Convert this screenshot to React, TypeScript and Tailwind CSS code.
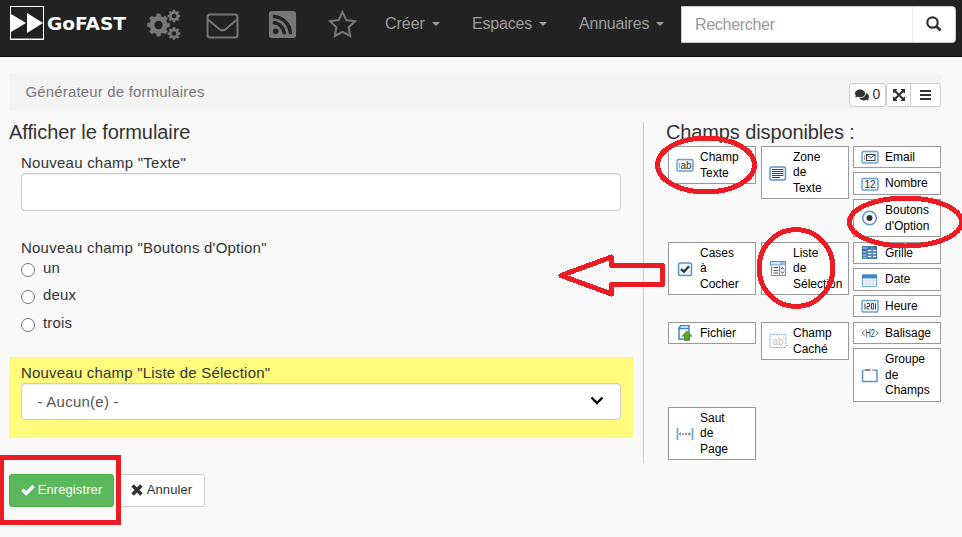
import type { ReactNode } from 'react';
import { FaRssSquare, FaComments } from 'react-icons/fa';

const BLUE = '#5b95cc';

function Caret() {
  return <span className="ml-[7px] inline-block border-x-4 border-t-4 border-x-transparent border-t-[#9d9d9d]" />;
}

function Logo() {
  return (
    <svg width="120" height="36" viewBox="0 0 120 36">
      <rect x="1.500" y="1.500" width="33" height="33" fill="none" stroke="#fff" />
      <path d="M2 33.500H34" stroke="#888" />
      <path d="M2 9V27L17 18ZM18 8V28L34 18Z" fill="#fff" />
      <text x="38" y="25" fontSize="18" fontWeight="bold" fill="#fff" textLength="79" lengthAdjust="spacingAndGlyphs" fontFamily="DejaVu Sans, sans-serif">GoFAST</text>
    </svg>
  );
}

// Ring with eight square teeth, centred on (x, y).
function Gear({ x, y, scale }: { x: number; y: number; scale: number }) {
  return (
    <g transform={`translate(${x} ${y}) scale(${scale})`}>
      <circle r="6.800" fill="none" stroke="#777" strokeWidth="5" />
      {[0, 45, 90, 135, 180, 225, 270, 315].map((angle) => (
        <path key={angle} d="M-2.300 -8.500L-1.700 -11.500H1.700L2.300 -8.500Z" fill="#777" stroke="#777" strokeWidth="0.500" transform={`rotate(${angle})`} />
      ))}
    </g>
  );
}

function Cogs() {
  return (
    <svg width="34" height="32" viewBox="0 0 34 32">
      <Gear x={11.500} y={16} scale={0.97} />
      <Gear x={27} y={7} scale={0.54} />
      <Gear x={27} y={24.500} scale={0.54} />
    </svg>
  );
}

function Envelope() {
  return (
    <svg width="33" height="26" viewBox="0 0 33 26" fill="none" stroke="#777" strokeWidth="2">
      <rect x="1.500" y="1.500" width="30" height="23" rx="2.500" />
      <path d="M2 6.500C7 11 10 13 13 16C15.500 18 17.500 18 20 16C23 13 26 11 31 6.500" />
    </svg>
  );
}

function Star() {
  return (
    <svg width="30" height="29" viewBox="0 0 30 29" fill="none" stroke="#777" strokeWidth="2">
      <path d="M14.500 3L18.200 11L27 12.200L20.600 18.300L22.200 27L14.500 22.800L6.800 27L8.400 18.300L2 12.200L10.800 11Z" />
    </svg>
  );
}

function Search() {
  return (
    <svg width="16" height="16" viewBox="0 0 16 16" fill="none" stroke="#333">
      <circle cx="6.500" cy="6.500" r="5.200" strokeWidth="2.200" />
      <path d="M10.200 10.200L14.600 14.600" strokeWidth="2.800" />
    </svg>
  );
}

function Expand() {
  return (
    <svg width="12" height="12" viewBox="0 0 12 12" fill="#333">
      <path d="M0 0H4.500L3.200 1.700L6 4.500L8.800 1.700L7.500 0H12V4.500L10.300 3.200L7.500 6L10.300 8.800L12 7.500V12H7.500L8.800 10.300L6 7.500L3.200 10.300L4.500 12H0V7.500L1.700 8.800L4.500 6L1.700 3.200L0 4.500Z" />
    </svg>
  );
}

function Check() {
  return (
    <svg width="14" height="12" viewBox="0 0 14 12" fill="none" stroke="#fff" strokeWidth="3.400">
      <path d="M1.300 5.700L5.200 9.300L12.700 2" />
    </svg>
  );
}

function Cross() {
  return (
    <svg width="12" height="12" viewBox="0 0 12 12" fill="none" stroke="#333" strokeWidth="3.600">
      <path d="M1.600 1.600L10.400 10.400M10.400 1.600L1.600 10.400" />
    </svg>
  );
}

function Frame({ children }: { children?: ReactNode }) {
  return (
    <>
      <rect x="1" y="2.500" width="16" height="11.500" rx="1.500" fill="#eef5fb" stroke="#6fa3d3" strokeWidth="1.500" />
      {children}
    </>
  );
}

const sans = { fontFamily: 'Liberation Sans, Arial, sans-serif' };

const icons: Record<string, ReactNode> = {
  text: (
    <Frame>
      <path d="M3.500 6V11.500" stroke="#aaa" />
      <text x="4.500" y="11.800" fontSize="10" fill="#333" {...sans}>ab</text>
    </Frame>
  ),
  area: (
    <>
      <rect x="1" y="2" width="15.500" height="13" rx="1.500" fill="#f4f8fc" stroke={BLUE} strokeWidth="1.500" />
      <path d="M3 4.500H14.500M3 6.500H14.500M3 8.500H14.500M3 10.500H14.500M3 12.500H11" stroke="#444" />
    </>
  ),
  email: (
    <Frame>
      <path d="M3.500 6V11" stroke="#aaa" />
      <rect x="5.500" y="5.500" width="8.500" height="6" fill="#fff" stroke="#444" />
      <path d="M5.500 5.500L9.800 9L14 5.500" fill="none" stroke="#444" />
    </Frame>
  ),
  number: (
    <Frame>
      <text x="3.500" y="12" fontSize="10" fill="#333" textLength="11" {...sans}>12</text>
    </Frame>
  ),
  radio: (
    <>
      <circle cx="8.500" cy="8" r="6.800" fill="#fff" stroke={BLUE} strokeWidth="1.500" />
      <circle cx="8.500" cy="8" r="3" fill="#333" />
    </>
  ),
  check: (
    <>
      <rect x="2.500" y="2" width="13" height="12.500" rx="1.500" fill="#eef5fb" stroke={BLUE} strokeWidth="1.500" />
      <path d="M5 8.200L8 10.700L13 5.200" fill="none" stroke="#333" strokeWidth="2.300" />
    </>
  ),
  select: (
    <>
      <rect x="1.500" y="0.500" width="15" height="3.500" fill="#d8e8f6" stroke={BLUE} />
      <path d="M12 0V4M13 2H16" stroke={BLUE} />
      <path d="M2.500 4.500V14.500H16.500V4.500" fill="#f4f8fc" stroke={BLUE} />
      <path d="M4.500 6.500H9M4.500 9.500H9M4.500 12H9" stroke="#555" />
      <path d="M10.500 5V14" stroke={BLUE} />
      <path d="M12 8.500L13.500 6.500L15 8.500M12 10.500L13.500 12.500L15 10.500" fill="none" stroke="#555" />
    </>
  ),
  grid: (
    <>
      <rect x="1" y="1" width="15" height="13" fill="#3b6f9f" />
      <path d="M2 3H5M2 7H5M2 10H5M2 12.500H5" stroke="#9cc4e8" strokeWidth="1.500" />
      <path d="M7 5.500H10.500M12 5.500H15M7 8.500H10.500M12 8.500H15M7 11.500H10.500M12 11.500H15" stroke="#e8f2fa" strokeWidth="1.500" />
      <path d="M6 1V14M11 1V14" stroke="#6aa2d4" />
    </>
  ),
  date: (
    <>
      <rect x="1.500" y="3" width="14" height="11.500" fill="#fff" stroke="#76a8d8" />
      <rect x="1" y="2.500" width="15" height="4" fill="#3d87c6" />
      <path d="M2 9H15M2 12H15M5 6.500V14M8.500 6.500V14M12 6.500V14" stroke="#c3dcf0" />
    </>
  ),
  time: (
    <Frame>
      <path d="M4 5.500V11.500M6 5.500H8.500V8.500H6V11H8.500M10.500 5.500V11H12.500V5.500ZM14.500 5.500V11.500" fill="none" stroke="#444" />
    </Frame>
  ),
  file: (
    <>
      <path d="M3 3L5 0.500H13V14H3Z" fill="#f7fbfe" stroke="#3b86c6" strokeWidth="1.500" />
      <path d="M3 3.500H13" stroke="#3b86c6" strokeWidth="1.500" />
      <path d="M11 6L16 11.200H13.500V15.500H8.500V11.200H6Z" fill="#58a818" stroke="#4c7d2c" strokeWidth="0.700" />
    </>
  ),
  hidden: (
    <>
      <rect x="1" y="1.500" width="16" height="13" rx="1" fill="#fafcfe" stroke="#6ea4d5" strokeDasharray="1.500 1" />
      <text x="3.500" y="11.500" fontSize="10" fill="#c4c4c4" {...sans}>ab</text>
    </>
  ),
  markup: (
    <>
      <path d="M4 5.500L1 8L4 10.500M14.500 5.500L17.500 8L14.500 10.500" fill="none" stroke="#666" />
      <text x="4.500" y="11.500" fontSize="10" fill="#333" textLength="9.500" lengthAdjust="spacingAndGlyphs" {...sans}>H2</text>
    </>
  ),
  group: (
    <>
      <path d="M2.500 3.500H1.500V14.500H16V3.500H14" fill="#fff" stroke={BLUE} strokeWidth="1.500" />
      <path d="M3.500 3H9.500" stroke="#666" strokeWidth="1.500" />
      <path d="M11 3H15" stroke="#777" />
    </>
  ),
  page: (
    <>
      <path d="M1.500 2V14M16.500 2V14" stroke="#76a8d8" strokeWidth="1.800" />
      <path d="M3 8H15" stroke="#333" strokeDasharray="2 1" />
      <path d="M5 6L3 8L5 10M13 6L15 8L13 10" fill="none" stroke="#999" strokeWidth="0.700" />
    </>
  ),
};

function Field({ icon, lines, size }: { icon: string; lines: string[]; size: string }) {
  return (
    <div className={`flex w-[88px] items-center border border-[#999] bg-white pl-[7px] text-[12px] leading-[15.500px] text-black ${size}`}>
      <svg className="shrink-0" width="18" height="16" viewBox="0 0 18 16">{icons[icon]}</svg>
      <div className="mt-px ml-[6px] whitespace-nowrap">
        {lines.map((line) => <div key={line}>{line}</div>)}
      </div>
    </div>
  );
}

function Annotations() {
  return (
    <svg className="pointer-events-none absolute top-0 left-0" width="962" height="537" fill="none" stroke="#ed1c24" strokeWidth="5" shapeRendering="crispEdges">
      <ellipse cx="706" cy="165" rx="48.500" ry="27" />
      <ellipse cx="905.500" cy="222" rx="56" ry="24" />
      <ellipse cx="796" cy="268" rx="37" ry="38.500" />
      <path d="M561 275.500L611.500 257V265.500H662.500V284.500H611.500V294Z" strokeLinejoin="round" />
      <path d="M0 457.500H118.500V522.500H0" />
      <path d="M2 455V525" strokeWidth="4" />
    </svg>
  );
}

export default function App() {
  return (
    <div className="relative h-[537px] w-[962px] overflow-hidden bg-[#f9f9f9] font-['Liberation_Sans',Arial,sans-serif] text-[15px] text-[#333]">
      <header className="flex h-[57px] items-start border-b border-[#080808] bg-[#222] text-[#9d9d9d]">
        <div className="ml-[9px] mt-[5px] w-[138px]"><Logo /></div>
        <div className="mt-[9px] w-[59px]"><Cogs /></div>
        <div className="mt-[13px] w-[61px]"><Envelope /></div>
        <div className="mt-[9px] w-[61px]"><FaRssSquare size={31} color="#777" /></div>
        <div className="mt-[9px] w-[57px]"><Star /></div>
        <nav className="flex h-[48px] items-center text-[16px]">
          <div className="flex w-[87px] items-center tracking-[-0.05px]">Créer<Caret /></div>
          <div className="flex w-[107px] items-center tracking-[-0.2px]">Espaces<Caret /></div>
          <div className="flex w-[102px] items-center tracking-[-0.2px]">Annuaires<Caret /></div>
        </nav>
        <div className="mt-[6px] flex h-[37px] w-[275px] rounded-r-[4px] border border-[#ccc] bg-white">
          <div className="flex w-[231px] items-center border-r border-[#e8e8e8] pl-[13px] text-[16px] tracking-[-0.3px] text-[#999]">Rechercher</div>
          <div className="flex flex-1 items-center justify-center pb-[2px]"><Search /></div>
        </div>
      </header>

      <div className="mt-[16px] ml-[9px] flex h-[38px] w-[932px] justify-between rounded bg-[#f4f4f4]">
        <div className="pt-[9px] pl-[16.500px] leading-[20px] tracking-[0.16px] text-[#777]">Générateur de formulaires</div>
        <div className="mt-[10px] flex h-[24px]">
          <div className="flex w-[37px] items-center justify-center gap-1 rounded-[3px] border border-[#ccc] bg-white pb-px text-[14px]"><FaComments size={14} />0</div>
          <div className="flex w-[55px] rounded-[3px] border border-[#ccc] bg-white">
            <div className="flex w-[24px] items-center justify-center border-r border-[#ccc]"><Expand /></div>
            <div className="flex flex-1 items-center justify-center">
              <div className="flex w-[11px] flex-col gap-[2px]"><i className="h-[2px] bg-[#333]" /><i className="h-[2px] bg-[#333]" /><i className="h-[2px] bg-[#333]" /></div>
            </div>
          </div>
        </div>
      </div>

      <main className="mt-[11px] ml-[9px] flex h-[341px]">
        <section className="flex w-[635px] flex-col border-r border-[#ccc]">
          <h2 className="h-[31px] text-[20px] leading-[20px] tracking-[-0.08px]">Afficher le formulaire</h2>
          <div className="ml-[12px] h-[85px]">
            <div className="h-[20px] leading-[20px] tracking-[0.24px]">Nouveau champ "Texte"</div>
            <div className="h-[38px] w-[600px] rounded-[4px] border border-[#ccc] bg-white shadow-[inset_0_1px_1px_rgba(0,0,0,0.075)]" />
          </div>
          <div className="ml-[12px] h-[119px]">
            <div className="h-[20px] leading-[20px] tracking-[0.22px]">Nouveau champ "Boutons d'Option"</div>
            {['un', 'deux', 'trois'].map((label) => (
              <div key={label} className="flex h-[27.300px] items-start">
                <span className="mt-[5px] h-[14px] w-[14px] rounded-full border border-[#767676] bg-white" />
                <span className="ml-[8px] leading-[20px] tracking-[0.15px]">{label}</span>
              </div>
            ))}
          </div>
          <div className="h-[81px] w-[624px] bg-[#fffc7d] px-[12px] pt-[6px]">
            <div className="h-[20px] leading-[20px] tracking-[0.2px]">Nouveau champ "Liste de Sélection"</div>
            <div className="flex h-[37px] w-[600px] items-center justify-between rounded-[4px] border border-[#ccc] bg-white pt-px pr-[15px] pl-[15.500px] tracking-[0.25px] text-[#555] shadow-[inset_0_1px_1px_rgba(0,0,0,0.075)]">
              - Aucun(e) -
              <svg className="-mt-[3px]" width="15" height="10" viewBox="0 0 15 10" fill="none" stroke="#000" strokeWidth="2.300"><path d="M1.500 1.500L7 7L12.500 1.500" /></svg>
            </div>
          </div>
        </section>

        <section className="ml-[22px]">
          <h2 className="h-[24px] text-[20px] leading-[20px] tracking-[-0.12px]">Champs disponibles :</h2>
          <div className="ml-[2px] flex gap-[5px]">
            <div className="grid grid-cols-[88px_88px] grid-rows-[96px_80px_85px_53px] items-start gap-x-[5px]">
              <Field icon="text" lines={['Champ', 'Texte']} size="h-[38px]" />
              <Field icon="area" lines={['Zone', 'de', 'Texte']} size="h-[53px]" />
              <Field icon="check" lines={['Cases', 'à', 'Cocher']} size="h-[53px]" />
              <Field icon="select" lines={['Liste', 'de', 'Sélection']} size="h-[53px]" />
              <Field icon="file" lines={['Fichier']} size="h-[22px]" />
              <Field icon="hidden" lines={['Champ', 'Caché']} size="h-[38px]" />
              <Field icon="page" lines={['Saut', 'de', 'Page']} size="h-[53px]" />
            </div>
            <div className="-ml-px flex flex-col gap-[4px]">
              <Field icon="email" lines={['Email']} size="h-[22px]" />
              <Field icon="number" lines={['Nombre']} size="h-[23px]" />
              <Field icon="radio" lines={['Boutons', "d'Option"]} size="mb-px h-[38px]" />
              <Field icon="grid" lines={['Grille']} size="h-[22px]" />
              <Field icon="date" lines={['Date']} size="h-[23px]" />
              <Field icon="time" lines={['Heure']} size="mb-px h-[22px]" />
              <Field icon="markup" lines={['Balisage']} size="h-[22px]" />
              <Field icon="group" lines={['Groupe', 'de', 'Champs']} size="h-[54px]" />
            </div>
          </div>
        </section>
      </main>

      <div className="mt-[11px] ml-[9px] flex h-[33px] gap-[4px] text-[13px]">
        <button className="flex w-[105px] items-center justify-center gap-[3px] rounded-[3px] border border-[#4cae4c] bg-[#5cb85c] pb-[2px] tracking-[0.1px] text-white"><Check />Enregistrer</button>
        <button className="flex w-[87px] items-center justify-center gap-[4px] rounded-[3px] border border-[#ccc] bg-white pb-[2px] tracking-[0.1px]"><Cross />Annuler</button>
      </div>
      <Annotations />
    </div>
  );
}
